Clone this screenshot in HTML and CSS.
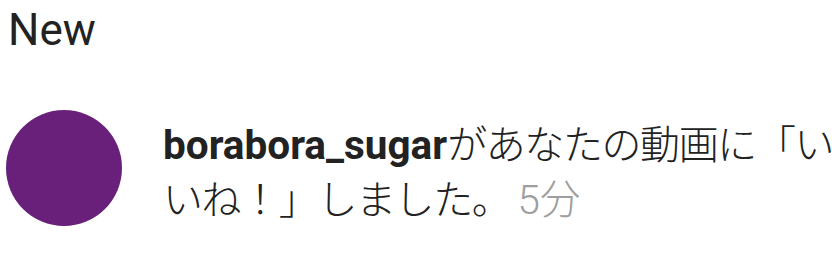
FILE: index.html
```html
<!DOCTYPE html>
<html lang="ja">
<head>
    <meta charset="UTF-8">
    <title>Notifications</title>
    <link rel="stylesheet" href="styles.css">
</head>
<body>
    <h2 class="section-title">New</h2>

    <div class="notice">
        <div class="avatar"></div>
        <p class="notice-text"><b class="user">borabora_sugar</b><span class="msg">があなたの動画に「いいね！」しました。</span> <span class="time">5分</span></p>
    </div>
</body>
</html>
```

FILE: styles.css
```css
body { margin: 0; background: #fff; font-family: Roboto, "Noto Sans CJK JP", sans-serif; color: #222; overflow: hidden; }

.section-title {
    margin: 0;
    padding: 4px 0 0 8px;
    font-size: 44px;
    font-weight: normal;
    line-height: 52px;
}

.notice {
    display: flex;
    align-items: flex-start;
    padding: 54px 0 0 6px;
}

.avatar {
    flex: none;
    width: 116px;
    height: 116px;
    border-radius: 50%;
    background-color: #69207a;
}

.notice-text {
    margin: 8px -14px 0 41px;
    font-size: 40.5px;
    line-height: 54px;
}

.user { font-weight: bold; color: #222; }

/* los caracteres japoneses van un poco más juntos */
.msg { font-size: 40px; font-weight: 300; letter-spacing: -1.4px; }

.time { color: #9e9e9e; font-weight: 300; margin-left: -3px; }
```
